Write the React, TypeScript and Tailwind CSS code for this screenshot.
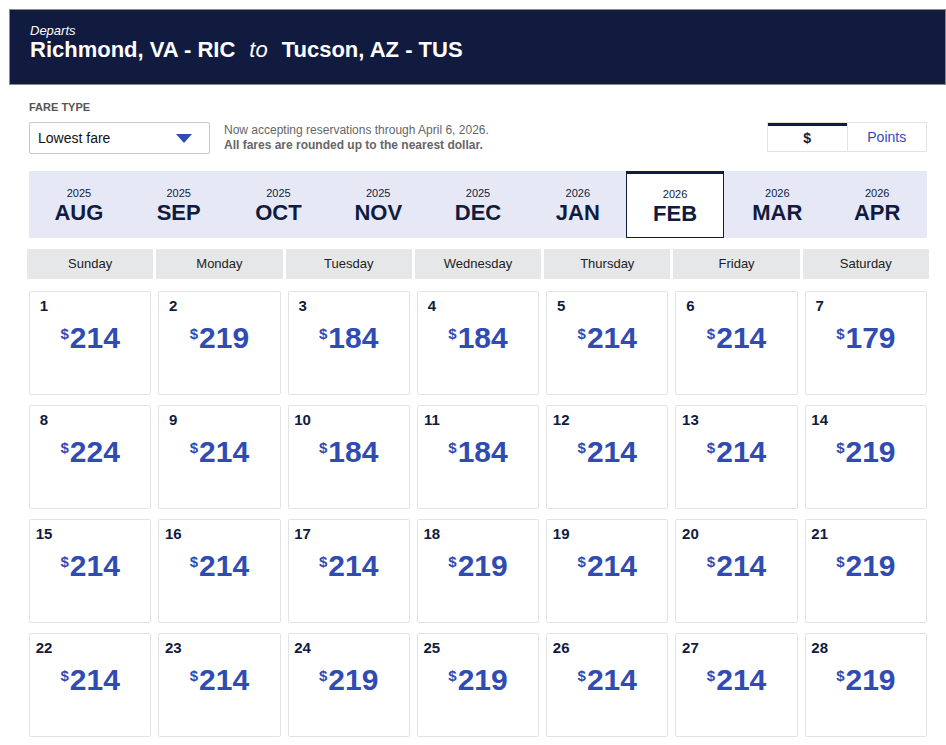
import React from 'react';

const months = [
  { year: '2025', name: 'AUG' },
  { year: '2025', name: 'SEP' },
  { year: '2025', name: 'OCT' },
  { year: '2025', name: 'NOV' },
  { year: '2025', name: 'DEC' },
  { year: '2026', name: 'JAN' },
  { year: '2026', name: 'FEB' },
  { year: '2026', name: 'MAR' },
  { year: '2026', name: 'APR' },
];

const weekdays = ['Sunday', 'Monday', 'Tuesday', 'Wednesday', 'Thursday', 'Friday', 'Saturday'];

// February fares, one per day
const fares = [
  214, 219, 184, 184, 214, 214, 179,
  224, 214, 184, 184, 214, 214, 219,
  214, 214, 214, 219, 214, 214, 219,
  214, 214, 219, 219, 214, 214, 219,
];

const DayCell: React.FC<{ day: number; fare: number }> = ({ day, fare }) => (
  <div className="mx-[2px] h-[104px] rounded-[2px] border border-[#e3e3e3] bg-white pt-[5px]">
    <div className="w-[28px] text-center text-[15px] font-bold leading-[17px] text-[#111b40]">{day}</div>
    <div className="mt-[7px] flex justify-center text-[#304cb2] font-bold">
      <span className="text-[15px] leading-[20px] mt-[3px] mr-[1px]">$</span>
      <span className="text-[30px] leading-[34px]">{fare}</span>
    </div>
  </div>
);

export default function App() {
  return (
    <div className="min-h-screen bg-white font-['Liberation_Sans',Arial,sans-serif] text-[#111b40]">
      {/* Header */}
      <div className="mt-[9px] ml-[9px] h-[76px] border border-[#8a8a8a] bg-[#111b40] pl-[20px] pt-[13px] text-white">
        <div className="text-[13px] italic leading-[15px]">Departs</div>
        <div className="text-[22px] font-bold leading-[24px]">
          Richmond, VA - RIC
          <span className="mx-[14px] font-normal italic">to</span>
          Tucson, AZ - TUS
        </div>
      </div>

      <div className="ml-[29px] w-[898px]">
        {/* Fare type row */}
        <div className="mt-[16px] text-[11px] font-bold leading-[13px] text-[#555555]">FARE TYPE</div>
        <div className="mt-[8px] flex items-start">
          <div className="flex h-[32px] w-[181px] items-center justify-between rounded-[2px] border border-[#c8c8c8] pl-[8px] pr-[17px] text-[14px] text-[#111]">
            <span>Lowest fare</span>
            <svg width="16" height="9" viewBox="0 0 16 9">
              <path d="M0 0 H16 L8 9 Z" fill="#304cb2" />
            </svg>
          </div>
          <div className="ml-[14px] mt-[1px] text-[12px] leading-[15px] text-[#666666]">
            <div>Now accepting reservations through April 6, 2026.</div>
            <div className="font-bold">All fares are rounded up to the nearest dollar.</div>
          </div>
          <div className="ml-auto flex h-[30px] w-[160px] border border-[#e3e3e3] text-[14px]">
            <div className="flex flex-1 items-center justify-center border-t-[3px] border-[#111b40] font-bold text-[#111b40]">
              $
            </div>
            <div className="flex flex-1 items-center justify-center border-l border-[#e3e3e3] text-[#304cb2]">
              Points
            </div>
          </div>
        </div>

        {/* Month selector */}
        <div className="mt-[17px] flex h-[67px] bg-[#e6e9f5]">
          {months.map((m) => {
            const active = m.name === 'FEB';
            return (
              <div key={m.name} className="flex-1">
                <div
                  className={
                    active
                      ? '-ml-[2px] mr-[3px] flex h-full flex-col items-center justify-center border border-t-[3px] border-[#111b40] bg-white pt-[2px]'
                      : 'flex h-full flex-col items-center justify-center pt-[2px]'
                  }
                >
                  <div className="text-[11px] leading-[13px]">{m.year}</div>
                  <div className="text-[22px] font-bold leading-[25px]">{m.name}</div>
                </div>
              </div>
            );
          })}
        </div>
      </div>

      {/* Calendar */}
      <div className="ml-[27px] mt-[11px] w-[902px]">
        <div className="grid grid-cols-7 gap-x-[3px]">
          {weekdays.map((d) => (
            <div
              key={d}
              className="flex h-[30px] items-center justify-center bg-[#e6e7e8] text-[13px] text-[#222]"
            >
              {d}
            </div>
          ))}
        </div>
        <div className="mt-[12px] grid grid-cols-7 gap-x-[3px] gap-y-[10px]">
          {fares.map((f, i) => (
            <DayCell key={i} day={i + 1} fare={f} />
          ))}
        </div>
      </div>
    </div>
  );
}
